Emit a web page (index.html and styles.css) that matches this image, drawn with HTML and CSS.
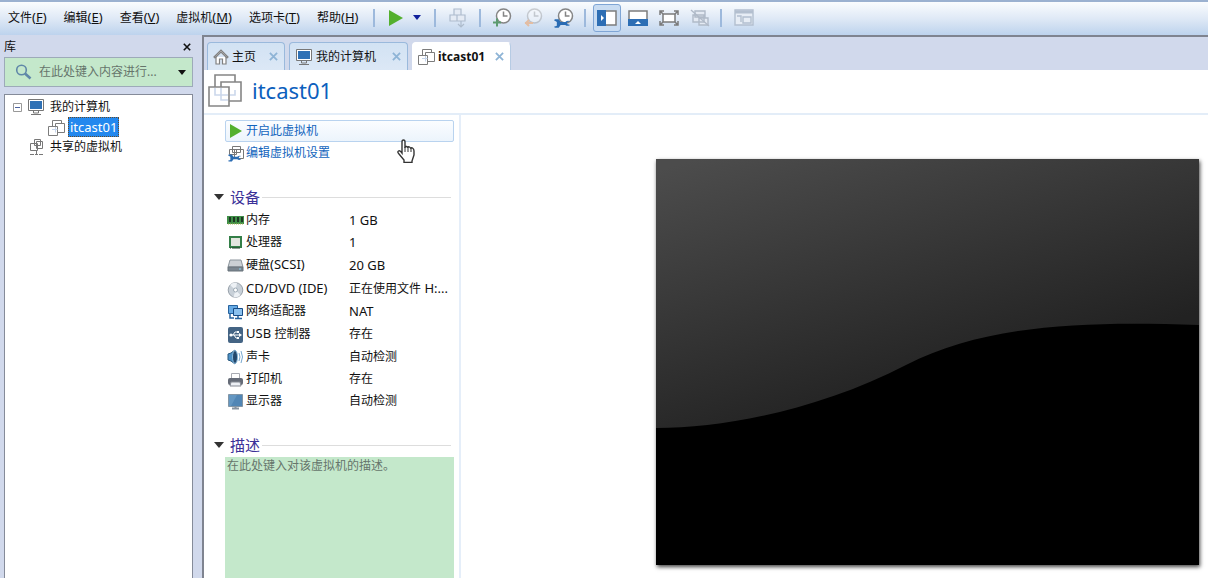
FILE: index.html
```html
<!DOCTYPE html>
<html lang="zh-CN">
<head>
<meta charset="utf-8">
<title>itcast01</title>
<link rel="stylesheet" href="styles.css">
</head>
<body>
<svg class="defs" aria-hidden="true">
  <defs>
    <symbol id="monitor" viewBox="0 0 18 18">
      <path d="M6.500 13v2h5v-2M4 16.500h10" fill="none" stroke="#777"/>
      <path d="M1.500 1.500h15v11h-15z" fill="#fff" stroke="#777"/>
      <path d="M3 3h12v8H3z" fill="#2f71b5"/>
    </symbol>
    <symbol id="vm" viewBox="0 0 34 34">
      <g fill="#fff" stroke="#858585" stroke-width="1.600">
        <path d="M7 2h20v20H7z"/><path d="M13 9h20v19H13z"/><path d="M1 14h20v19H1z"/>
      </g>
      <path d="M7 15v7h13M13 15v12h7M22 22h5v-5" fill="none" stroke="#cbd8ec" stroke-width="1.600"/>
    </symbol>
    <symbol id="vm-small" viewBox="0 0 17 17">
      <g fill="#fff" stroke="#7c7c7c">
        <path d="M4.500 1.500h9v9h-9z"/><path d="M7.500 4.500h9v9h-9z"/><path d="M.5 7.500h9v9h-9z"/>
      </g>
      <path d="M4 10.500h3.500v3M7.500 8v2.500h2" fill="none" stroke="#c5d4ea"/>
    </symbol>
    <symbol id="close" viewBox="0 0 10 10"><path d="M1 1l8 8M9 1L1 9" fill="none" stroke="currentColor" stroke-width="2"/></symbol>
    <symbol id="play" viewBox="0 0 14 16"><path d="M0 0l14 8L0 16z" fill="#54b02e"/></symbol>
    <symbol id="down" viewBox="0 0 10 6"><path d="M0 0h10L5 6z" fill="currentColor"/></symbol>
    <symbol id="clock" viewBox="0 0 20 20">
      <circle cx="11.500" cy="8" r="7" fill="#fff" stroke="#858585" stroke-width="1.500"/>
      <path d="M11.500 3.500V8h4" fill="none" stroke="#858585" stroke-width="1.500"/>
    </symbol>
    <symbol id="wrench" viewBox="0 0 18 9"><path d="M1 0h4l2 3h5q2-2 5-1l-3 1v2l3 1q-3 2-5 0H7L5 9H1L0 8l3-1V3L0 1z" fill="#2a6cb4"/></symbol>
  </defs>
</svg>
<div class="app">
  <header class="topbar">
    <nav class="menu" aria-label="菜单">
      <button>文件<span class="latin">(<u>F</u>)</span></button>
      <button>编辑<span class="latin">(<u>E</u>)</span></button>
      <button>查看<span class="latin">(<u>V</u>)</span></button>
      <button>虚拟机<span class="latin">(<u>M</u>)</span></button>
      <button>选项卡<span class="latin">(<u>T</u>)</span></button>
      <button>帮助<span class="latin">(<u>H</u>)</span></button>
    </nav>
    <div class="group power">
      <button aria-label="开启"><svg width="14" height="16"><use href="#play"/></svg></button>
      <button class="navy" aria-label="电源选项"><svg width="8" height="5"><use href="#down"/></svg></button>
    </div>
    <div class="group send">
      <button disabled aria-label="发送"><svg width="20" height="20" viewBox="0 0 20 20" fill="#e5ebf4" stroke="#aebccd" stroke-width="1.200"><path d="M6 1h7v6H6zM2 7h7v6H2zM9 7h8v6H9z"/><path d="M13 13v5M10 16l3 3 3-3" fill="none"/></svg></button>
    </div>
    <div class="group snapshots">
      <button aria-label="拍摄快照"><svg width="20" height="20" viewBox="0 0 20 20"><use href="#clock"/><path d="M1 14.500h8M5 10.500v8" stroke="#5c9b70" stroke-width="2"/></svg></button>
      <button disabled aria-label="恢复快照"><svg width="20" height="20" viewBox="0 0 20 20"><use href="#clock" opacity=".35"/><path d="M10 15H2M6 12l-3 3 3 3" fill="none" stroke="#e3bda3" stroke-width="2"/></svg></button>
      <button aria-label="管理快照"><svg width="20" height="20" viewBox="0 0 20 20"><use href="#clock"/><use href="#wrench" x="0" y="11" width="17" height="9"/></svg></button>
    </div>
    <div class="group views">
      <button class="pressed" aria-label="显示库"><svg width="20" height="16" viewBox="0 0 20 16"><path d="M1 1h18v14H1z" fill="#fff" stroke="#7d7d7d" stroke-width="1.500"/><path d="M0 0h9v16H0z" fill="#2d6eb4"/><path d="M4 5l3 3-3 3z" fill="#fff"/></svg></button>
      <button aria-label="缩略图栏"><svg width="20" height="16" viewBox="0 0 20 16"><path d="M1 1h18v14H1z" fill="#fff" stroke="#7d7d7d" stroke-width="1.500"/><path d="M0 9h20v7H0z" fill="#2d6eb4"/><path d="M7 14l3-3 3 3z" fill="#fff"/></svg></button>
      <button aria-label="全屏"><svg width="20" height="16" viewBox="0 0 20 16" fill="none" stroke="#7b7b7b" stroke-width="1.500"><path d="M4 4h12v8H4z" fill="#fff"/><path d="M1 5V1h4M15 1h4v4M19 11v4h-4M5 15H1v-4M1 1l3 3M19 1l-3 3M19 15l-3-3M1 15l3-3"/></svg></button>
      <button disabled aria-label="Unity"><svg width="20" height="18" viewBox="0 0 20 18" fill="#e4eaf3" stroke="#b0bac8" stroke-width="1.400"><path d="M5 2h10v6H5zM3 6h11v7H3zM9 9h9v7H9z"/><path d="M1 1l18 16"/></svg></button>
    </div>
    <div class="group console">
      <button disabled aria-label="控制台视图"><svg width="20" height="17" viewBox="0 0 20 17" fill="#e7edf5" stroke="#b3bfcf" stroke-width="1.400"><path d="M1 1h18v15H1z"/><path d="M1 3h18" stroke-width="3"/><path d="M3 7h4v6M9 8h8v6H9z"/></svg></button>
    </div>
  </header>

  <div class="body">
    <aside class="sidebar">
      <div class="side-head"><h2>库</h2><button aria-label="关闭库"><svg width="8" height="8"><use href="#close"/></svg></button></div>
      <div class="search">
        <svg width="17" height="16" viewBox="0 0 17 16" fill="none" stroke="#5f87a8"><circle cx="6.500" cy="6" r="4.800" stroke-width="1.600"/><path d="M10 9.500l5.500 5" stroke-width="2.600"/></svg>
        <input type="text" aria-label="搜索" placeholder="在此处键入内容进行...">
        <button aria-label="搜索选项"><svg width="8" height="5"><use href="#down"/></svg></button>
      </div>
      <ul class="tree">
        <li>
          <div class="node"><svg width="9" height="9" viewBox="0 0 9 9"><path d="M.5.5h8v8h-8z" fill="#fff" stroke="#999"/><path d="M2 4.500h5" stroke="#4b62a0"/></svg><svg width="18" height="18"><use href="#monitor"/></svg><span>我的计算机</span></div>
          <ul>
            <li class="node"><svg width="17" height="17"><use href="#vm-small"/></svg><span class="selected latin">itcast01</span></li>
          </ul>
        </li>
        <li class="node shared"><svg width="16" height="18" viewBox="0 0 16 18" fill="#fff" stroke="#777"><path d="M5.500 1.500h6v6h-6zM7.500 3.500h6v7h-6zM1.500 5.500h7v7h-7z"/><path d="M7.500 13v3M1 16.500h4M6 16.500h3M10 16.500h4" fill="none"/></svg><span>共享的虚拟机</span></li>
      </ul>
    </aside>

    <main class="main">
      <div class="tabs">
        <div class="tab"><button class="label"><svg width="16" height="16" viewBox="0 0 16 16" fill="#fff" stroke="#808080" stroke-width="1.200"><path d="M3 8v7h3.500v-5h3v5H13V8"/><path d="M1 8l7-7 7 7-1 1-6-6-6 6z"/></svg><span>主页</span></button><button class="x" aria-label="关闭主页"><svg width="9" height="9"><use href="#close"/></svg></button></div>
        <div class="tab wide"><button class="label"><svg width="18" height="18"><use href="#monitor"/></svg><span>我的计算机</span></button><button class="x" aria-label="关闭我的计算机"><svg width="9" height="9"><use href="#close"/></svg></button></div>
        <div class="tab active"><button class="label"><svg width="17" height="17"><use href="#vm-small"/></svg><span>itcast01</span></button><button class="x" aria-label="关闭 itcast01"><svg width="9" height="9"><use href="#close"/></svg></button></div>
      </div>
      <div class="title"><svg width="34" height="34"><use href="#vm"/></svg><h1>itcast01</h1></div>
      <div class="content">
        <section class="details">
          <div class="actions">
            <a class="action hover" href="#"><svg width="16" height="14" viewBox="0 0 16 14"><path d="M2 0l12 7-12 7z" fill="#54b02e"/></svg>开启此虚拟机</a>
            <a class="action" href="#"><svg width="16" height="17" viewBox="0 0 16 17"><path d="M4.500 1.500h8v6h-8zM6.500 4.500h9v9h-9zM1.500 4.500h7v5h-7z" fill="#fff" stroke="#777"/><use href="#wrench" x="0" y="9" width="14" height="8"/></svg>编辑虚拟机设置</a>
            <svg class="pointer" width="20" height="24" viewBox="0 0 20 24"><path d="M6 14V3q0-2 1.500-2T9 3v6q0-2 1.500-1.500T12 9q0-2 1.500-1T15 10q0-2 1.500-1t1.500 3v4l-2 6v1.500H8V21l-5-6q-2-2-.5-3T6 14z" fill="#fff" stroke="#333" stroke-width="1.400"/><path d="M9 8v5M12 9v4M15 10v3" stroke="#333"/></svg>
          </div>
          <h2 class="section"><svg width="10" height="6"><use href="#down"/></svg><span>设备</span></h2>
          <table class="devices">
            <tr><th scope="row"><svg width="17" height="16" viewBox="0 0 17 16"><path d="M0 3h17v8H0z" fill="#3f8e47"/><path d="M2 4h2v5H2zM6 4h2v5H6zM10 4h2v5h-2zM14 4h2v5h-2z" fill="#1d3923"/><path d="M1 11h15" stroke="#b1b557" stroke-dasharray="1 1"/></svg>内存</th><td class="latin">1 GB</td></tr>
            <tr><th scope="row"><svg width="17" height="16" viewBox="0 0 17 16"><path d="M3 2h11v10H3z" fill="#e3e6df" stroke="#347f48" stroke-width="2"/><path d="M5 13h8M3 13h1" stroke="#203f28"/></svg>处理器</th><td class="latin">1</td></tr>
            <tr><th scope="row"><svg width="17" height="16" viewBox="0 0 17 16"><path d="M3 2h11l2 7H1z" fill="#cbd0d4" stroke="#8c959c"/><path d="M1 9h15v4H1z" fill="#7b868f" stroke="#68737b"/><path d="M12 11h2" stroke="#8fd2ee"/></svg>硬盘<span class="latin">(SCSI)</span></th><td class="latin">20 GB</td></tr>
            <tr><th scope="row"><svg width="17" height="16" viewBox="0 0 17 16"><circle cx="8.500" cy="8" r="7.300" fill="#c8d0d8" stroke="#98a1aa"/><path d="M8.500 8L3 3q3-3 7-2zM8.500 8l5 5q-3 3-7 2z" fill="#edf1f5"/><circle cx="8.500" cy="8" r="2" fill="#fff" stroke="#9daab5"/></svg><span class="latin">CD/DVD (IDE)</span></th><td>正在使用文件<span class="latin"> H:...</span></td></tr>
            <tr><th scope="row"><svg width="17" height="16" viewBox="0 0 17 16"><path d="M1.500 1.500h9v8h-9z" fill="#67abe5" stroke="#27639e"/><path d="M6.500 4.500h9v7h-9z" fill="#8bc1ee" stroke="#174c87"/><path d="M3 10v4h4M11 12v2M8 14.500h7" fill="none" stroke="#27639e" stroke-width="1.500"/></svg>网络适配器</th><td class="latin">NAT</td></tr>
            <tr><th scope="row"><svg width="17" height="16" viewBox="0 0 17 16"><rect x="1" y="0" width="15" height="16" rx="2" fill="#446484"/><path d="M3 8h10M6 8l2-3h3M7 8l2 3h2" fill="none" stroke="#fff"/><circle cx="4" cy="8" r="1.600" fill="#fff"/><path d="M12 6l3 2-3 2zM10 4h2v2h-2zM10 10h2v2h-2z" fill="#fff"/></svg><span class="latin">USB </span>控制器</th><td>存在</td></tr>
            <tr><th scope="row"><svg width="17" height="16" viewBox="0 0 17 16"><path d="M1 5l3-1 4-3v14l-4-3-3-1z" fill="#4c91c7" stroke="#28597f"/><ellipse cx="8" cy="8" rx="2.500" ry="6.500" fill="#23476b" stroke="#87b7da"/><path d="M12 4q2 4 0 8M14 2q3 6 0 12" fill="none" stroke="#77a8d0"/></svg>声卡</th><td>自动检测</td></tr>
            <tr><th scope="row"><svg width="17" height="16" viewBox="0 0 17 16"><path d="M4.500 1.500h8v5h-8z" fill="#fff" stroke="#a8abb2"/><rect x="1" y="6" width="15" height="7" rx="2" fill="#656b77"/><path d="M4 10h9l1 4H3z" fill="#edf0f5" stroke="#858a94"/></svg>打印机</th><td>存在</td></tr>
            <tr><th scope="row"><svg width="17" height="16" viewBox="0 0 17 16"><path d="M1.500.5h14v12h-14z" fill="#5186b5" stroke="#8295a5"/><path d="M2 1h8L4 12H2z" fill="#6497c2"/><path d="M8.500 13v1M5 14.500h7" stroke="#8793a0" stroke-width="2"/></svg>显示器</th><td>自动检测</td></tr>
          </table>
          <h2 class="section"><svg width="10" height="6"><use href="#down"/></svg><span>描述</span></h2>
          <textarea class="description" aria-label="描述" placeholder="在此处键入对该虚拟机的描述。"></textarea>
        </section>
        <section class="preview">
          <svg class="screen" viewBox="0 0 543 406" role="img" aria-label="虚拟机屏幕">
            <defs><linearGradient id="glass" gradientUnits="userSpaceOnUse" x1="40" y1="0" x2="125" y2="280"><stop offset="0" stop-color="#4c4c4c"/><stop offset="1" stop-color="#222"/></linearGradient></defs>
            <path d="M0 0h543v406H0z"/>
            <path d="M0 0H543V166C430 162 330 165 250 206C165 250 70 269 0 269Z" fill="url(#glass)"/>
          </svg>
        </section>
      </div>
    </main>
  </div>
</div>
</body>
</html>
```
FILE: styles.css
```css
* { box-sizing: border-box; }
body, h1, h2, ul { margin: 0; padding: 0; }
ul { list-style: none; }
body, button, input, textarea {
  font-family: "Noto Sans", "Noto Sans CJK SC", sans-serif;
  font-size: 12px;
  line-height: 18px;
  color: #111;
}
button { border: 0; padding: 0; background: none; white-space: nowrap; }
svg { display: block; flex: none; }
.defs { position: absolute; width: 0; height: 0; }
.latin { font-size: 13px; }
.app { display: flex; flex-direction: column; height: 100vh; overflow: hidden; background: #d1d9ec; }

.topbar {
  display: flex;
  flex: none;
  align-items: center;
  height: 35px;
  padding: 0 0 2px 8px;
  border-top: 2px solid #9bb1d0;
  background: linear-gradient(#fafcfe, #dfe9f6 50%, #bdd3ed);
}
.menu { display: flex; gap: 17px; margin-right: 15px; }
.group { display: flex; align-items: center; height: 28px; }
.group::before { content: ""; width: 2px; height: 18px; background: #9db9dc; }
.power { gap: 14px; margin-right: 13px; }
.power .navy { margin-left: -4px; color: #10209c; }
.send { gap: 12px; margin-right: 11px; }
.snapshots { gap: 11px; margin-right: 10px; }
.views { gap: 11px; margin-right: 10px; }
.console { gap: 12px; }
.views .pressed { padding: 5px 3px; margin: 0 -4px; border: 1px solid #7fa5d5; border-radius: 3px; background: #c9dcf2; }

.body { display: flex; flex: 1; min-height: 0; }
.sidebar { display: flex; flex: none; flex-direction: column; width: 202px; padding: 2px 9px 0 4px; }
.side-head { display: flex; align-items: center; justify-content: space-between; height: 20px; padding-right: 2px; }
.side-head h2 { font-size: 12px; font-weight: 400; }
.search {
  display: flex;
  align-items: center;
  height: 30px;
  padding: 0 6px 0 10px;
  border: 1px solid #9daab9;
  background: #c4e8cb;
}
.search input { flex: 1; min-width: 0; padding: 0 0 0 7px; border: 0; outline: 0; background: none; }
.search input::placeholder, .description::placeholder { color: #66756b; opacity: 1; }
.tree { flex: 1; margin-top: 7px; padding: 2px 0 0 8px; border: 1px solid #858b99; border-bottom: 0; background: #fff; }
.node { display: flex; align-items: center; gap: 5px; height: 20px; }
.tree ul { padding-left: 35px; }
.selected { margin-left: -2px; padding: 0 1px; border: 1px dotted #654b2a; background: #2388ee; color: #fff; }
.shared { padding-left: 16px; }

.main { display: flex; flex: 1; flex-direction: column; min-width: 0; border-top: 2px solid #7f8490; border-left: 2px solid #7f8490; }
.tabs { display: flex; flex: none; gap: 4px; padding: 5px 0 0 3px; }
.tab {
  display: flex;
  align-items: center;
  justify-content: space-between;
  gap: 13px;
  height: 28px;
  padding: 0 6px 0 5px;
  border: 1px solid #9ab9dc;
  border-bottom: 0;
  border-radius: 4px 4px 0 0;
  background: linear-gradient(#d2e2f3, #dce8f6);
}
.tab .label { display: flex; align-items: center; gap: 3px; }
.tab .x { color: #8eb4d6; }
.tab.wide { gap: 16px; }
.tab.active { gap: 10px; background: #fff; border-color: #fff #b6cbe4 #fff #fff; }
.active .label { font-weight: 700; }
.title { display: flex; flex: none; align-items: center; gap: 10px; height: 45px; padding: 0 4px 4px; border-bottom: 2px solid #e3edf8; background: #fff; }
.title h1 { font-size: 22px; font-weight: 400; line-height: 30px; color: #0c60bd; }
.content { display: flex; flex: 1; min-height: 0; background: #fff; }

.details { display: flex; flex: none; flex-direction: column; width: 257px; padding: 5px 5px 0 9px; border-right: 2px solid #e5eef9; }
.actions { position: relative; padding-left: 12px; margin-bottom: 21px; }
.action { display: flex; align-items: center; gap: 2px; height: 22px; padding: 0 2px; border: 1px solid transparent; border-radius: 2px; color: #1265bd; text-decoration: none; }
.hover { border-color: #b9d3ef; background: linear-gradient(#fbfdff, #ecf4fc); }
.pointer { position: absolute; left: 183px; top: 19px; }
.section { display: flex; flex: none; align-items: center; gap: 6px; height: 24px; padding: 0 3px 0 1px; color: #333; font-size: 15px; font-weight: 400; line-height: 22px; }
.section span { color: #3b3198; }
.section::after { content: ""; flex: 1; height: 1px; margin-left: -4px; background: #ddd; }
.devices { flex: none; height: 203px; margin: 0 0 21px 14px; border-collapse: collapse; }
.devices th, .devices td { padding: 0; font-weight: 400; text-align: left; white-space: nowrap; }
.devices th { width: 122px; }
.devices th svg { display: inline-block; margin-right: 2px; vertical-align: middle; }
.description { flex: 1; margin-left: 12px; padding: 0 2px; border: 0; outline: 0; resize: none; background: #c4e8cb; }
.preview { display: flex; flex: 1; justify-content: flex-end; align-items: flex-start; min-width: 0; padding: 44px 9px 13px 16px; }
.screen { flex: 0 1 auto; height: 100%; min-width: 0; aspect-ratio: 543 / 406; box-shadow: 1px 2px 4px #444; }
```
